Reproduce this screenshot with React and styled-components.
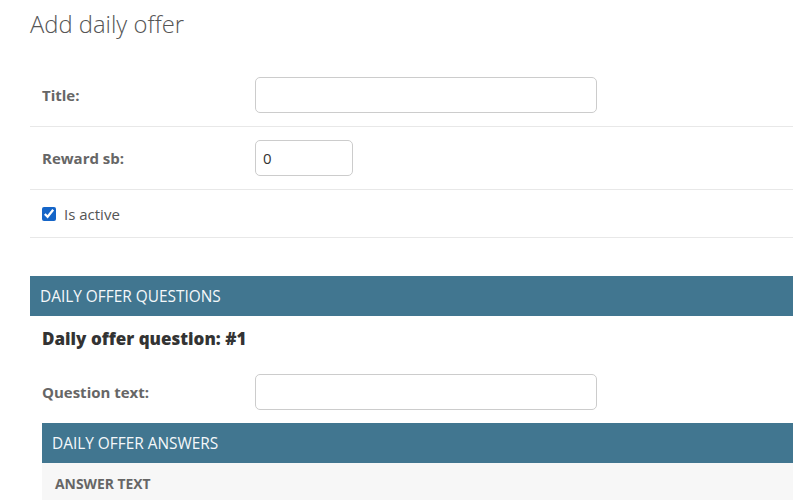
import React from 'react';
import styled, { createGlobalStyle } from 'styled-components';

const GlobalStyle = createGlobalStyle`
    body {
        margin: 0;
        background: #fff;
        font-family: "Open Sans", "Noto Sans", sans-serif;
        color: #333;
        overflow: hidden;
    }
`;

const Page = styled.div`
    padding: 7px 0 0 30px;
`;

const Heading = styled.h1`
    margin: 0 0 23px;
    font-size: 23.8px;
    font-weight: 300;
    line-height: 34px;
    color: #555;
`;

const Row = styled.div`
    display: flex;
    align-items: center;
    padding: ${p => (p.$tight ? '13px 12px 12px' : '13px 12px')};
    border-bottom: ${p => (p.$plain ? 'none' : '1px solid #e8e8e8')};
`;

const Label = styled.label`
    width: 213px;
    flex-shrink: 0;
    font-size: 15px;
    font-weight: 700;
    color: #666;
`;

const Input = styled.input`
    box-sizing: border-box;
    width: ${p => p.$w}px;
    height: 36px;
    border: 1px solid #ccc;
    border-radius: 5px;
    padding: 0 7px;
    font-family: inherit;
    font-size: 15px;
    color: #333;
    outline: none;
`;

const CheckLabel = styled.label`
    display: flex;
    align-items: center;
    gap: 8px;
    font-size: 15px;
    line-height: 22px;
    color: #555;
`;

const Check = styled.input`
    margin: 0;
    width: 14px;
    height: 14px;
    accent-color: #1565c8;
`;

const Section = styled.div`
    margin-top: ${p => p.$top || 0}px;
    margin-left: ${p => p.$indent || 0}px;
`;

const Caption = styled.div`
    height: 40px;
    display: flex;
    align-items: center;
    padding-left: 10px;
    background: #417690;
    color: #f4f8fa;
    font-size: 15.4px;
`;

const SubHead = styled.h3`
    margin: 0;
    padding: 12px 12px 11px;
    font-size: 17px;
    font-weight: 800;
    line-height: 22px;
    color: #333;
`;

const TableHead = styled.div`
    height: 40px;
    display: flex;
    align-items: center;
    padding-left: 13px;
    background: #f7f7f7;
    font-size: 13.9px;
    font-weight: 700;
    color: #666;
`;

export default function App() {
    return (
        <Page>
            <GlobalStyle />
            <Heading>Add daily offer</Heading>
            <Row>
                <Label>Title:</Label>
                <Input $w={342} />
            </Row>
            <Row>
                <Label>Reward sb:</Label>
                <Input $w={98} defaultValue="0" />
            </Row>
            <Row $tight>
                <CheckLabel>
                    <Check type="checkbox" defaultChecked />
                    Is active
                </CheckLabel>
            </Row>
            <Section $top={38}>
                <Caption>DAILY OFFER QUESTIONS</Caption>
                <SubHead>Daily offer question: #1</SubHead>
                <Row $plain>
                    <Label>Question text:</Label>
                    <Input $w={342} />
                </Row>
                <Section $indent={12}>
                    <Caption>DAILY OFFER ANSWERS</Caption>
                    <TableHead>ANSWER TEXT</TableHead>
                </Section>
            </Section>
        </Page>
    );
}
